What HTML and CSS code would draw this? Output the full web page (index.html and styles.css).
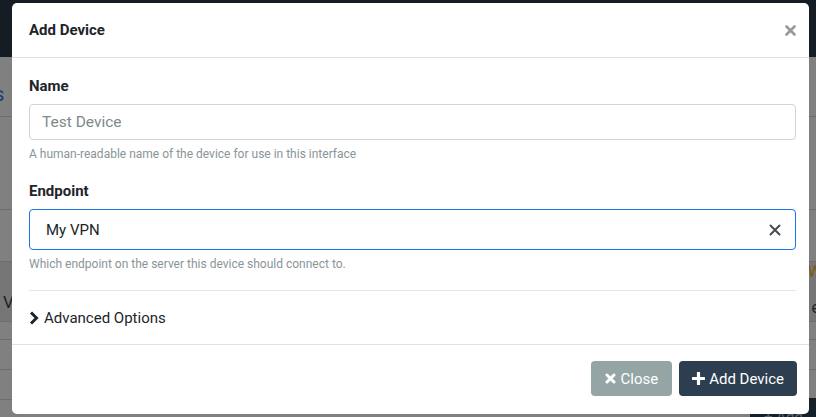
FILE: index.html
```html
<!DOCTYPE html>
<html lang="en">
<head>
  <meta charset="UTF-8" />
  <title>Add Device</title>
  <link rel="stylesheet" href="styles.css">
</head>
<body>

  <div class="page">
    <div class="navbar"></div>
    <div class="content">
      <div class="heading-row"><span class="link">s</span></div>
      <div class="row r1"></div>
      <div class="row r2"></div>
      <div class="row shaded">
        <span class="cell">V</span>
        <span class="side">
          <span class="warn">W</span>
          <span class="cell-right">e</span>
        </span>
      </div>
      <div class="row r3"></div>
      <div class="row r4"></div>
      <div class="row r5"></div>
    </div>
    <span class="ghost-btn">+ Add Device</span>
  </div>

  <div class="modal">
    <div class="modal-header">
      <h5 class="modal-title">Add Device</h5>
      <button class="btn-close" aria-label="Close">
        <svg width="11" height="11" viewBox="0 0 11 11"><path d="M1.5 1.5 L9.5 9.5 M9.5 1.5 L1.5 9.5" stroke="#999" stroke-width="2.6" stroke-linecap="round"/></svg>
      </button>
    </div>

    <div class="modal-body">
      <label class="form-label">Name</label>
      <input class="form-control" type="text" placeholder="Test Device">
      <div class="form-text">A human-readable name of the device for use in this interface</div>

      <label class="form-label second">Endpoint</label>
      <div class="select focused">
        <span class="select-value">My VPN</span>
        <svg class="select-clear" width="12" height="12" viewBox="0 0 12 12"><path d="M1.5 1.5 L10.5 10.5 M10.5 1.5 L1.5 10.5" stroke="#444c55" stroke-width="2" stroke-linecap="round"/></svg>
      </div>
      <div class="form-text">Which endpoint on the server this device should connect to.</div>

      <hr>

      <div class="advanced">
        <svg width="10" height="14" viewBox="0 0 10 14"><path d="M2 1.5 L7.5 7 L2 12.5" fill="none" stroke="#212529" stroke-width="3" stroke-linejoin="miter"/></svg>
        <span>Advanced Options</span>
      </div>
    </div>

    <div class="modal-footer">
      <button class="btn btn-secondary">
        <svg width="11" height="11" viewBox="0 0 11 11"><path d="M2 2 L9 9 M9 2 L2 9" stroke="#fff" stroke-width="3" stroke-linecap="round"/></svg>
        Close
      </button>
      <button class="btn btn-primary">
        <svg width="13" height="13" viewBox="0 0 13 13"><path d="M6.5 1 V12 M1 6.5 H12" stroke="#fff" stroke-width="3.2" stroke-linecap="round"/></svg>
        Add Device
      </button>
    </div>
  </div>

</body>
</html>
```

FILE: styles.css
```css
* {
  box-sizing: border-box;
}
body {
  margin: 0;
  font-family: Roboto, "Liberation Sans", sans-serif;
  color: #212529;
  background-color: #808080;
  overflow: hidden;
}

/* dimmed page behind the modal */
.page {
  width: 816px;
  height: 417px;
  overflow: hidden;
  position: relative;
}
.navbar {
  height: 57px;
  background-color: #151c24;
}
.content {
  display: flex;
  flex-direction: column;
}
.heading-row {
  height: 60px;
  border-bottom: 1px solid #6e6e6e;
  display: flex;
  align-items: center;
}
.link {
  color: #1a3d6e;
  font-size: 20px;
  margin-left: -6px;
  margin-top: 14px;
}
.row {
  border-bottom: 1px solid #6e6e6e;
  display: flex;
  align-items: center;
  justify-content: space-between;
}
.r1 { height: 93px; }
.r2 { height: 52px; }
.r3 { height: 18px; }
.r4 { height: 30px; }
.r5 { height: 30px; }
.row.shaded {
  height: 60px;
  background-color: #767676;
}
.cell {
  margin-left: 3px;
  margin-top: 20px;
  color: #1e2228;
  font-size: 17px;
}
.side {
  display: flex;
  flex-direction: column;
  align-items: flex-end;
  gap: 17px;
  margin-top: -4px;
}
.warn {
  color: #7a5a10;
  font-size: 16px;
  margin-right: -6px;
}
.cell-right {
  color: #1e2228;
  font-size: 16px;
  margin-right: -4px;
}
.ghost-btn {
  position: absolute;
  left: 750px;
  top: 398px;
  width: 100px;
  height: 30px;
  padding: 10px 14px;
  background-color: #16202a;
  color: #5a6470;
  border-radius: 4px;
  font-size: 15px;
}

/* modal */
.modal {
  position: absolute;
  top: 3px;
  left: 12px;
  width: 797px;
  background-color: #fff;
  border-radius: 5px;
  display: flex;
  flex-direction: column;
}
.modal-header {
  height: 55px;
  padding: 0 13px 0 17px;
  border-bottom: 1px solid #dee2e6;
  display: flex;
  align-items: center;
  justify-content: space-between;
}
.modal-title {
  margin: 0;
  font-size: 15px;
  font-weight: 700;
}
.btn-close {
  background: none;
  border: none;
  padding: 0;
  display: flex;
}
.modal-body {
  padding: 16px 13px 0 17px;
  display: flex;
  flex-direction: column;
}
.form-label {
  font-size: 15px;
  font-weight: 700;
  line-height: 24px;
  margin-bottom: 6px;
}
.form-label.second {
  margin-top: 16px;
}
.form-control {
  height: 36px;
  border: 1px solid #ced4da;
  border-radius: 4px;
  padding: 0 12px;
  font-family: inherit;
  font-size: 15.5px;
  color: #212529;
}
.form-control::placeholder {
  color: #7b8a8b;
}
.form-text {
  font-size: 12px;
  line-height: 18px;
  margin-top: 5px;
  color: #8a9499;
}
.select {
  height: 41px;
  border: 1px solid #1a73e8;
  border-radius: 4px;
  display: flex;
  align-items: center;
  justify-content: space-between;
  padding: 0 14px 0 16px;
}
.select-value {
  font-size: 15px;
}
hr {
  width: 100%;
  margin: 17px 0 0;
  border: none;
  border-top: 1px solid #e3e6ea;
}
.advanced {
  display: flex;
  align-items: center;
  gap: 5px;
  height: 53px;
  font-size: 15px;
}
.modal-footer {
  border-top: 1px solid #dee2e6;
  padding: 16px 12px 18px;
  display: flex;
  justify-content: flex-end;
  gap: 7px;
}
.btn {
  height: 35px;
  border: none;
  border-radius: 4px;
  padding: 0 14px;
  color: #fff;
  font-family: inherit;
  font-size: 15px;
  display: flex;
  align-items: center;
  gap: 4px;
}
.btn-secondary {
  background-color: #95a5a6;
}
.btn-primary {
  background-color: #2c3e50;
  padding: 0 13px;
}
```
